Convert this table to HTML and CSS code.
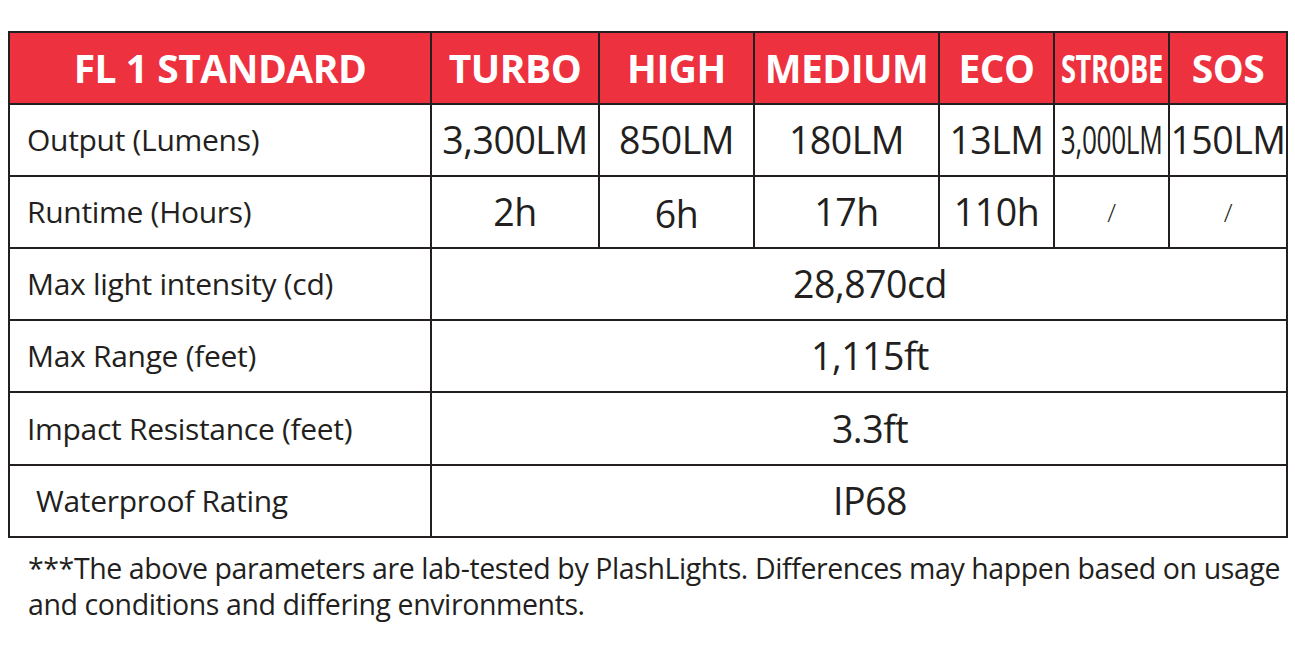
FILE: index.html
```html
<!DOCTYPE html>
<html lang="en">
<head>
<meta charset="utf-8">
<title>FL 1 Standard</title>
<link rel="stylesheet" href="styles.css">
</head>
<body>
<div class="page">
  <table class="spec">
    <colgroup>
      <col class="c-label">
      <col class="c-turbo">
      <col class="c-high">
      <col class="c-med">
      <col class="c-eco">
      <col class="c-strobe">
      <col class="c-sos">
    </colgroup>
    <thead>
      <tr class="head">
        <th class="title">FL 1 STANDARD</th>
        <th>TURBO</th>
        <th>HIGH</th>
        <th>MEDIUM</th>
        <th>ECO</th>
        <th><span class="cond">STROBE</span></th>
        <th>SOS</th>
      </tr>
    </thead>
    <tbody>
      <tr>
        <td class="label">Output (Lumens)</td>
        <td class="val">3,300LM</td>
        <td class="val">850LM</td>
        <td class="val">180LM</td>
        <td class="val">13LM</td>
        <td class="val"><span class="cond">3,000LM</span></td>
        <td class="val">150LM</td>
      </tr>
      <tr>
        <td class="label">Runtime (Hours)</td>
        <td class="val">2h</td>
        <td class="val"><span class="low">6h</span></td>
        <td class="val">17h</td>
        <td class="val">110h</td>
        <td class="val slash">/</td>
        <td class="val slash">/</td>
      </tr>
      <tr>
        <td class="label">Max light intensity (cd)</td>
        <td class="val wide" colspan="6">28,870cd</td>
      </tr>
      <tr>
        <td class="label">Max Range (feet)</td>
        <td class="val wide" colspan="6">1,115ft</td>
      </tr>
      <tr>
        <td class="label">Impact Resistance (feet)</td>
        <td class="val wide" colspan="6">3.3ft</td>
      </tr>
      <tr>
        <td class="label indent">Waterproof Rating</td>
        <td class="val wide" colspan="6">IP68</td>
      </tr>
    </tbody>
  </table>
  <p class="note">***The above parameters are lab-tested by PlashLights. Differences may happen based on usage and conditions and differing environments.</p>
</div>
</body>
</html>
```

FILE: styles.css
```css
html, body {
  margin: 0;
  padding: 0;
  background: #ffffff;
}

.page {
  padding: 31px 9px 0 8px;
  font-family: "Open Sans", "Noto Sans", sans-serif;
  color: #231f20;
}

.spec {
  width: 1278px;
  border-collapse: collapse;
  table-layout: fixed;
}

.c-label { width: 422px; }
.c-turbo { width: 168px; }
.c-high { width: 155px; }
.c-med { width: 185px; }
.c-eco { width: 115px; }
.c-strobe { width: 115px; }
.c-sos { width: 118px; }

.spec th,
.spec td {
  border: 2px solid #231f20;
  padding: 0;
  height: 70.1px;
  line-height: 40px;
  vertical-align: middle;
  white-space: nowrap;
}

.head th {
  background: #ed313e;
  color: #ffffff;
  font-weight: 700;
  font-size: 39px;
  letter-spacing: -0.5px;
  text-align: center;
}

.cond {
  display: inline-block;
  transform: scaleX(0.7);
  margin: 0 -22px;
}

.label {
  font-size: 30px;
  text-align: left;
  padding-left: 17px !important;
  letter-spacing: -0.3px;
}

.label.indent {
  padding-left: 26px !important;
}

.val {
  font-size: 37.5px;
  text-align: center;
  letter-spacing: -0.5px;
}

.low {
  display: inline-block;
  vertical-align: -4px;
}

.val.slash {
  font-size: 26px;
  font-weight: 300;
}

.val.wide {
  padding-left: 22px !important;
}

.note {
  margin: 12px 0 0 20px;
  font-size: 28.5px;
  line-height: 36px;
  letter-spacing: -0.4px;
  max-width: 1262px;
}
```
